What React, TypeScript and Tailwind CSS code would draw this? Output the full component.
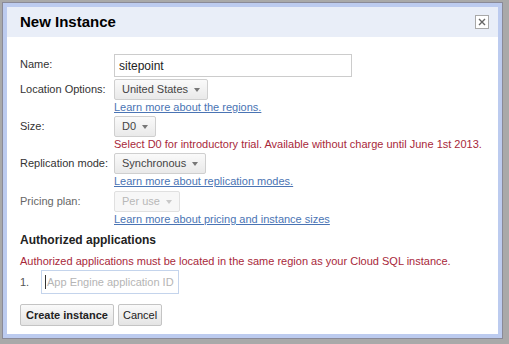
import React from 'react';

const Arrow = ({ light }: { light?: boolean }) => (
    <span className={`ml-[6px] inline-block h-0 w-0 border-x-[3px] border-t-[4px] border-x-transparent ${light ? 'border-t-[#c8c8c8]' : 'border-t-[#777]'}`} />
);

const Dropdown = ({ label, disabled }: { label: string; disabled?: boolean }) => (
    <button
        className={`flex h-[21px] items-center whitespace-nowrap rounded-[2px] border px-[7px] leading-[13px] ${disabled
            ? 'border-[#e0e0e0] bg-[#f7f7f7] text-[#b8b8b8]'
            : 'border-[#cfcfcf] bg-gradient-to-b from-[#fafafa] to-[#e9e9e9] text-[#444]'
            }`}
    >
        {label}
        <Arrow light={disabled} />
    </button>
);

const Row = ({ label, muted, className, children }: { label: string; muted?: boolean; className?: string; children: React.ReactNode }) => (
    <div className={`flex ${className ?? ''}`}>
        <div className={`w-[94px] shrink-0 whitespace-nowrap pt-[4px] leading-[13px] ${muted ? 'text-[#666]' : 'text-[#333]'}`}>{label}</div>
        <div className="flex flex-col items-start">{children}</div>
    </div>
);

const Link = ({ children }: { children: React.ReactNode }) => (
    <a className="mt-[1px] whitespace-nowrap leading-[13px] text-[#4a74b4] underline">{children}</a>
);

export default function App() {
    return (
        <div
            className="h-[344px] w-[509px] bg-[#a9a9a9] p-[2px] text-[11px]"
            style={{ fontFamily: '"Liberation Sans", Arial, sans-serif' }}
        >
            <div className="h-[337px] w-[501px] border border-[#8a8a98] bg-[#bccbef] p-[4px]">
                <div className="flex h-full flex-col bg-white">
                    <div className="flex h-[30px] items-center justify-between bg-[#e9eef8] pl-[13px] pr-[9px]">
                        <span className="text-[15px] font-bold text-black">New Instance</span>
                        <span className="flex h-[14px] w-[14px] items-center justify-center border border-[#a8a8a8] bg-white">
                            <svg width="8" height="8" viewBox="0 0 8 8">
                                <path d="M1 1L7 7M7 1L1 7" stroke="#666" strokeWidth="1.4" />
                            </svg>
                        </span>
                    </div>

                    <div className="flex flex-col pl-[13px] pt-[17px]">
                        <Row label="Name:">
                            <div className="flex h-[23px] w-[238px] items-center border border-[#cccccc] px-[4px] text-[12px] text-[#222]">
                                sitepoint
                            </div>
                        </Row>
                        <Row label="Location Options:" className="mt-[2px]">
                            <Dropdown label="United States" />
                            <Link>Learn more about the regions.</Link>
                        </Row>
                        <Row label="Size:" className="mt-[2px]">
                            <Dropdown label="D0" />
                            <span className="mt-[1px] whitespace-nowrap leading-[13px] text-[#a8283a]">
                                Select D0 for introductory trial. Available without charge until June 1st 2013.
                            </span>
                        </Row>
                        <Row label="Replication mode:" className="mt-[2px]">
                            <Dropdown label="Synchronous" />
                            <Link>Learn more about replication modes.</Link>
                        </Row>
                        <Row label="Pricing plan:" muted className="mt-[3px]">
                            <Dropdown label="Per use" disabled />
                            <Link>Learn more about pricing and instance sizes</Link>
                        </Row>

                        <div className="mt-[7px] text-[12px] font-bold leading-[14px] text-[#222]">Authorized applications</div>
                        <div className="mt-[8px] whitespace-nowrap leading-[13px] text-[#a8283a]">
                            Authorized applications must be located in the same region as your Cloud SQL instance.
                        </div>
                        <div className="mt-[2px] flex items-center">
                            <span className="w-[21px] text-[#555]">1.</span>
                            <div className="flex h-[24px] w-[138px] items-center border border-[#c4d4ec] px-[3px] text-[#b5b5b5]">
                                <span className="mr-[1px] h-[14px] w-px bg-[#333]" />
                                App Engine application ID
                            </div>
                        </div>
                        <div className="mt-[10px] flex gap-[4px]">
                            <button className="h-[22px] rounded-[2px] border border-[#c4c4c4] bg-gradient-to-b from-[#fafafa] to-[#e4e4e4] px-[5px] text-[11px] font-bold text-[#222]">
                                Create instance
                            </button>
                            <button className="h-[22px] rounded-[2px] border border-[#c4c4c4] bg-gradient-to-b from-[#fafafa] to-[#e4e4e4] px-[4px] text-[11px] text-[#222]">
                                Cancel
                            </button>
                        </div>
                    </div>
                </div>
            </div>
        </div>
    );
}
